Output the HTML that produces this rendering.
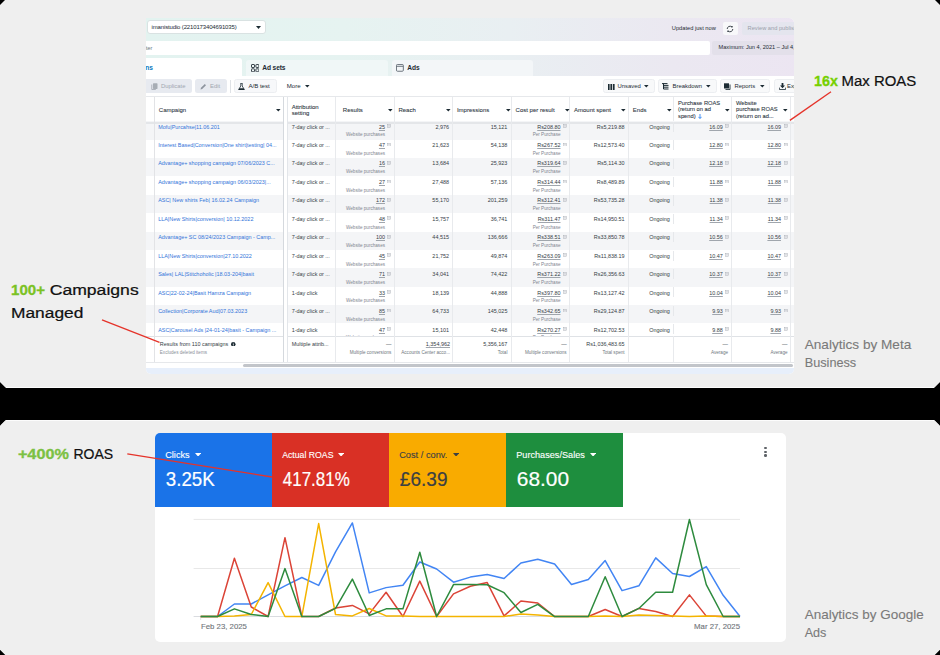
<!DOCTYPE html><html><head><meta charset="utf-8"><style>
*{box-sizing:border-box;margin:0;padding:0}
html,body{width:940px;height:655px;overflow:hidden;background:#000;font-family:"Liberation Sans",sans-serif}
.a{position:absolute}
.card{position:absolute;left:0;width:940px;background:#efefef;border-radius:7px}
.t{position:absolute;white-space:nowrap;line-height:1}
</style></head><body>

<div class="card" style="top:0;height:388px;border-radius:0;background:#fcfcfc;clip-path:polygon(6px 0,934px 0,940px 6px,940px 382px,934px 388px,6px 388px,0 382px,0 6px)"></div>
<div class="card" style="top:0;height:387px;border-radius:0;clip-path:polygon(5px 0,935px 0,940px 5px,940px 381.6px,934.6px 387px,5.4px 387px,0 381.6px,0 5px)"></div>
<div class="card" style="top:419.7px;height:235.3px;border-radius:0;background:#fcfcfc;clip-path:polygon(6px 0,934px 0,940px 6px,940px 229.3px,934px 235.3px,6px 235.3px,0 229.3px,0 6px)"></div>
<div class="card" style="top:420.8px;height:234.2px;border-radius:0;clip-path:polygon(5.4px 0,934.6px 0,940px 5.4px,940px 229px,934px 235px,6px 235px,0 229px,0 5.4px)"></div>
<div class="a" style="left:146px;top:17.5px;width:648px;height:356.0px;overflow:hidden;border-radius:0 5px 5px 5px;background:#fff">
<div class="a" style="left:0;top:0;width:660px;height:58.0px;background:linear-gradient(90deg,#e3f3f0 0%,#e6f3f1 30%,#e9eff2 55%,#ebe8f1 80%,#ece5f2 100%)"></div>
<div class="a" style="left:0.8px;top:2.3px;width:119.59999999999997px;height:13.900000000000002px;background:#fff;border:0.5px solid #d9e2e2;border-radius:3px"></div>
<div class="t" style="left:5.6px;top:6.4px;font-size:6px;color:#1c2b33;letter-spacing:-0.15px">imanistudio (2210173404691035)</div>
<svg class="a" style="left:109.5px;top:8.3px" width="5" height="3" viewBox="0 0 5 3"><path d="M0 0H5L2.5 3Z" fill="#1c2b33"/></svg>
<div class="t" style="left:525.8px;top:8.27px;font-size:5.7px;color:#1c2b33">Updated just now</div>
<div class="a" style="left:576.7px;top:4.3px;width:15.1px;height:12.8px;background:#f8f8fa;border-radius:2px"></div>
<svg class="a" style="left:580.3px;top:7.1px" width="8" height="8" viewBox="0 0 8 8"><g fill="none" stroke="#2a333b" stroke-width="0.9"><path d="M6.8 4A2.8 2.8 0 0 1 2.2 6.1"/><path d="M1.2 4A2.8 2.8 0 0 1 5.8 1.9"/></g><path d="M5 0.9L7 1.3 6 3Z M3 7.1L1 6.7 2 5Z" fill="#2a333b"/></svg>
<div class="a" style="left:596px;top:4.4px;width:60px;height:13.3px;background:#e4e5ee;border-radius:2px"></div>
<div class="t" style="left:601.6px;top:8.27px;font-size:5.7px;color:#9aa0ab">Review and publish</div>
<div class="a" style="left:0;top:23.1px;width:564px;height:14.5px;background:#fff;border-radius:0 2px 2px 0"></div>
<div class="t" style="left:-3.8px;top:28.5px;font-size:5.4px;color:#6b7680">filter</div>
<div class="a" style="left:566.3px;top:23.1px;width:90px;height:14.5px;background:#e3e0ea;border-radius:2px"></div>
<div class="t" style="left:572.6px;top:27.8px;font-size:5.6px;color:#1c2b33">Maximum: Jun 4, 2021 – Jul 4, 2024</div>
<div class="a" style="left:0;top:40.5px;width:96.3px;height:17.5px;background:#fff;border-radius:0 3px 0 0"></div>
<div class="t" style="left:-28.5px;top:47.01px;font-size:6.6px;color:#0a78be;font-weight:bold">Campaigns</div>
<div class="a" style="left:100px;top:42.5px;width:141.7px;height:15.5px;background:#f0f7f7;border-radius:3px 3px 0 0"></div>
<div class="t" style="left:116.3px;top:47.01px;font-size:6.6px;color:#1c2b33;font-weight:bold;letter-spacing:-0.1px">Ad sets</div>
<svg class="a" style="left:104.8px;top:46.2px" width="8.4" height="8.3" viewBox="0 0 8.4 8.3"><g fill="none" stroke="#3a444c" stroke-width="1"><rect x="0.5" y="0.5" width="3" height="3" rx="0.5"/><rect x="4.9" y="0.5" width="3" height="3" rx="0.5"/><rect x="0.5" y="4.8" width="3" height="3" rx="0.5"/><rect x="4.9" y="4.8" width="3" height="3" rx="0.5"/></g></svg>
<div class="a" style="left:246px;top:42.5px;width:141.29999999999995px;height:15.5px;background:#f3f6f8;border-radius:3px 3px 0 0"></div>
<div class="t" style="left:261.3px;top:47.01px;font-size:6.6px;color:#1c2b33;font-weight:bold">Ads</div>
<svg class="a" style="left:250.2px;top:46.6px" width="7.8" height="7.7" viewBox="0 0 7.8 7.7"><g fill="none" stroke="#5d6670" stroke-width="0.9"><rect x="0.45" y="0.45" width="6.9" height="6.8" rx="1"/><path d="M0.6 2.3H7.2"/></g></svg>
<div class="a" style="left:0;top:58.0px;width:660px;height:21.0px;background:#fff"></div>
<div class="a" style="left:-6px;top:61.7px;width:51.9px;height:14.3px;background:#e7eaf0;border-radius:2.5px"></div>
<svg class="a" style="left:4.7px;top:65.5px" width="7" height="7" viewBox="0 0 7 7"><rect x="2" y="0.3" width="4.5" height="5.6" rx="0.6" fill="#a7adb5"/><path d="M0.8 1.5V6.5H4.8" fill="none" stroke="#a7adb5" stroke-width="0.9"/></svg>
<div class="t" style="left:14.9px;top:66.11px;font-size:5.9px;color:#a1a7b0;">Duplicate</div>
<div class="a" style="left:49.3px;top:61.7px;width:31.7px;height:14.3px;background:#e7eaf0;border-radius:2.5px"></div>
<svg class="a" style="left:54.3px;top:65.5px" width="7" height="7" viewBox="0 0 7 7"><path d="M0.5 6.5L1 4.8 4.8 1 6 2.2 2.2 6Z" fill="#8d949e"/></svg>
<div class="t" style="left:64px;top:66.11px;font-size:5.9px;color:#a1a7b0;">Edit</div>
<div class="a" style="left:84.3px;top:62.5px;width:0.6px;height:13px;background:#dfe2e6"></div>
<div class="a" style="left:88px;top:61.7px;width:43.1px;height:14.3px;background:#f7f8fa;border:0.6px solid #eceef1;border-radius:2.5px"></div>
<svg class="a" style="left:92.4px;top:65.2px" width="7" height="7.5" viewBox="0 0 7 7.5"><path d="M2.4 0.4H4.6M2.8 0.5V3L0.6 6.6H6.4L4.2 3V0.5" fill="none" stroke="#1c2b33" stroke-width="0.8"/><path d="M1.4 5.2H5.6L6.4 6.9H0.6Z" fill="#1c2b33"/></svg>
<div class="t" style="left:102.4px;top:65.94px;font-size:6.1px;color:#1c2b33;">A/B test</div>
<div class="t" style="left:140.7px;top:65.94px;font-size:6.1px;color:#1c2b33;">More</div>
<svg class="a" style="left:158.7px;top:67.53px;overflow:visible" width="4.6" height="2.53" viewBox="0 0 4.6 2.53"><path d="M0 0H4.6L2.3 2.53Z" fill="#1c2b33"/></svg>
<div class="a" style="left:457.4px;top:61.9px;width:51.4px;height:14.1px;background:#f8f9fa;border:0.6px solid #eceef1;border-radius:2.5px"></div>
<div class="t" style="left:471.5px;top:66.11px;font-size:5.9px;color:#1c2b33;">Unsaved</div>
<svg class="a" style="left:498.3px;top:67.53px;overflow:visible" width="4.6" height="2.53" viewBox="0 0 4.6 2.53"><path d="M0 0H4.6L2.3 2.53Z" fill="#1c2b33"/></svg>
<svg class="a" style="left:461.7px;top:66.1px" width="7" height="6" viewBox="0 0 7 6"><rect x="0" y="0" width="1.6" height="6" fill="#1c2b33"/><rect x="2.4" y="0" width="1.6" height="6" fill="#1c2b33"/><rect x="4.8" y="0" width="1.8" height="6" fill="#1c2b33"/></svg>
<div class="a" style="left:512px;top:61.9px;width:58.7px;height:14.1px;background:#f8f9fa;border:0.6px solid #eceef1;border-radius:2.5px"></div>
<div class="t" style="left:526.5px;top:66.11px;font-size:5.9px;color:#1c2b33;">Breakdown</div>
<svg class="a" style="left:560.2px;top:67.53px;overflow:visible" width="4.6" height="2.53" viewBox="0 0 4.6 2.53"><path d="M0 0H4.6L2.3 2.53Z" fill="#1c2b33"/></svg>
<svg class="a" style="left:516.3px;top:65.8px" width="7" height="6.5" viewBox="0 0 7 6.5"><path d="M0 0.6H5.5M1.5 2.4H6.5M1.5 4.2H6.5M1.5 6H6.5M1.5 0.6V6" fill="none" stroke="#1c2b33" stroke-width="1"/></svg>
<div class="a" style="left:574px;top:61.9px;width:50px;height:14.1px;background:#f8f9fa;border:0.6px solid #eceef1;border-radius:2.5px"></div>
<div class="t" style="left:588.5px;top:66.11px;font-size:5.9px;color:#1c2b33;">Reports</div>
<svg class="a" style="left:613.5px;top:67.53px;overflow:visible" width="4.6" height="2.53" viewBox="0 0 4.6 2.53"><path d="M0 0H4.6L2.3 2.53Z" fill="#1c2b33"/></svg>
<svg class="a" style="left:578.3px;top:65.7px" width="7" height="7" viewBox="0 0 7 7"><rect x="0" y="0.3" width="5" height="5.2" fill="#1c2b33"/><path d="M6 1.5V6.6H1.5" fill="none" stroke="#1c2b33" stroke-width="0.9"/></svg>
<div class="a" style="left:628.3px;top:61.9px;width:55.7px;height:14.1px;background:#f8f9fa;border:0.6px solid #eceef1;border-radius:2.5px"></div>
<div class="t" style="left:641px;top:66.11px;font-size:5.9px;color:#1c2b33;">Export</div>
<svg class="a" style="left:632.6px;top:65.3px" width="7" height="7" viewBox="0 0 7 7"><path d="M2.6 0H4.4V2.6H6L3.5 5.2 1 2.6H2.6Z" fill="#1c2b33"/><path d="M0.4 4.6V6.5H6.6V4.6" fill="none" stroke="#1c2b33" stroke-width="0.8"/></svg>
<div class="a" style="left:-6px;top:79.0px;width:654px;height:25.8px;background:#fff"></div>
<div class="a" style="left:-6px;top:103.7px;width:654px;height:18.39px;background:#f4f5f7"></div>
<div class="a" style="left:-6px;top:122.09px;width:654px;height:18.39px;background:#fff"></div>
<div class="a" style="left:-6px;top:140.48px;width:654px;height:18.39px;background:#f4f5f7"></div>
<div class="a" style="left:-6px;top:158.87px;width:654px;height:18.39px;background:#fff"></div>
<div class="a" style="left:-6px;top:177.26px;width:654px;height:18.39px;background:#f4f5f7"></div>
<div class="a" style="left:-6px;top:195.65px;width:654px;height:18.39px;background:#fff"></div>
<div class="a" style="left:-6px;top:214.04px;width:654px;height:18.39px;background:#f4f5f7"></div>
<div class="a" style="left:-6px;top:232.43px;width:654px;height:18.39px;background:#fff"></div>
<div class="a" style="left:-6px;top:250.82px;width:654px;height:18.39px;background:#f4f5f7"></div>
<div class="a" style="left:-6px;top:269.21px;width:654px;height:18.39px;background:#fff"></div>
<div class="a" style="left:-6px;top:287.6px;width:654px;height:18.39px;background:#f4f5f7"></div>
<div class="a" style="left:-6px;top:305.99px;width:654px;height:12.71px;background:#fff"></div>
<div class="a" style="left:-6px;top:318.7px;width:654px;height:26.1px;background:#fff"></div>
<div class="a" style="left:-6px;top:78.7px;width:654px;height:0.7px;background:#e6e8eb"></div>
<div class="a" style="left:-6px;top:104.6px;width:654px;height:1.7px;background:#e4e6e9"></div>
<div class="a" style="left:-6px;top:318.3px;width:654px;height:0.9px;background:#dfe2e6"></div>
<div class="a" style="left:-6px;top:344.4px;width:654px;height:0.8px;background:#e6e8eb"></div>
<div class="a" style="left:8.15px;top:79.0px;width:0.7px;height:265.8px;background:#e8eaed"></div>
<div class="a" style="left:137.05px;top:79.0px;width:0.7px;height:265.8px;background:#e8eaed"></div>
<div class="a" style="left:141.15px;top:79.0px;width:0.7px;height:265.8px;background:#e8eaed"></div>
<div class="a" style="left:189.15px;top:79.0px;width:0.7px;height:265.8px;background:#e8eaed"></div>
<div class="a" style="left:247.95px;top:79.0px;width:0.7px;height:265.8px;background:#e8eaed"></div>
<div class="a" style="left:306.15px;top:79.0px;width:0.7px;height:265.8px;background:#e8eaed"></div>
<div class="a" style="left:365.45px;top:79.0px;width:0.7px;height:265.8px;background:#e8eaed"></div>
<div class="a" style="left:423.35px;top:79.0px;width:0.7px;height:265.8px;background:#e8eaed"></div>
<div class="a" style="left:482.05px;top:79.0px;width:0.7px;height:265.8px;background:#e8eaed"></div>
<div class="a" style="left:527.25px;top:79.0px;width:0.7px;height:24.7px;background:#e8eaed"></div>
<div class="a" style="left:527.25px;top:318.7px;width:0.7px;height:26.1px;background:#e8eaed"></div>
<div class="a" style="left:585.25px;top:79.0px;width:0.7px;height:265.8px;background:#e8eaed"></div>
<div class="a" style="left:644.05px;top:79.0px;width:0.7px;height:265.8px;background:#e8eaed"></div>
<div class="a" style="left:8.2px;top:79.0px;width:0.7px;height:265.8px;background:#e2e3e6"></div>
<div class="a" style="left:137.4px;top:79.0px;width:4.1px;height:265.8px;background:#fff"></div>
<div class="a" style="left:137.1px;top:79.0px;width:0.7px;height:265.8px;background:#d5d9de"></div>
<div class="a" style="left:141.2px;top:79.0px;width:0.6px;height:265.8px;background:#e3e6ea"></div>
<div class="t" style="left:12.8px;top:89.12px;font-size:6.0px;color:#2b353e;-webkit-text-stroke:0.08px #2b353e">Campaign</div>
<svg class="a" style="left:129.5px;top:91.23px;overflow:visible" width="4.6" height="2.53" viewBox="0 0 4.6 2.53"><path d="M0 0H4.6L2.3 2.53Z" fill="#1c2b33"/></svg>
<div class="t" style="left:145.7px;top:86.02px;font-size:6.0px;color:#2b353e;-webkit-text-stroke:0.08px #2b353e">Attribution</div>
<div class="t" style="left:145.7px;top:92.32px;font-size:6.0px;color:#2b353e;-webkit-text-stroke:0.08px #2b353e">setting</div>
<div class="t" style="left:196.8px;top:89.12px;font-size:6.0px;color:#2b353e;-webkit-text-stroke:0.08px #2b353e">Results</div>
<svg class="a" style="left:241.8px;top:91.23px;overflow:visible" width="4.6" height="2.53" viewBox="0 0 4.6 2.53"><path d="M0 0H4.6L2.3 2.53Z" fill="#1c2b33"/></svg>
<div class="t" style="left:252.4px;top:89.12px;font-size:6.0px;color:#2b353e;-webkit-text-stroke:0.08px #2b353e">Reach</div>
<svg class="a" style="left:300.3px;top:91.23px;overflow:visible" width="4.6" height="2.53" viewBox="0 0 4.6 2.53"><path d="M0 0H4.6L2.3 2.53Z" fill="#1c2b33"/></svg>
<div class="t" style="left:310.9px;top:89.12px;font-size:6.0px;color:#2b353e;-webkit-text-stroke:0.08px #2b353e">Impressions</div>
<svg class="a" style="left:359.5px;top:91.23px;overflow:visible" width="4.6" height="2.53" viewBox="0 0 4.6 2.53"><path d="M0 0H4.6L2.3 2.53Z" fill="#1c2b33"/></svg>
<div class="t" style="left:369.6px;top:89.12px;font-size:6.0px;color:#2b353e;-webkit-text-stroke:0.08px #2b353e">Cost per result</div>
<svg class="a" style="left:418.5px;top:91.23px;overflow:visible" width="4.6" height="2.53" viewBox="0 0 4.6 2.53"><path d="M0 0H4.6L2.3 2.53Z" fill="#1c2b33"/></svg>
<div class="t" style="left:428px;top:89.12px;font-size:6.0px;color:#2b353e;-webkit-text-stroke:0.08px #2b353e">Amount spent</div>
<svg class="a" style="left:475.2px;top:91.23px;overflow:visible" width="4.6" height="2.53" viewBox="0 0 4.6 2.53"><path d="M0 0H4.6L2.3 2.53Z" fill="#1c2b33"/></svg>
<div class="t" style="left:486.8px;top:89.12px;font-size:6.0px;color:#2b353e;-webkit-text-stroke:0.08px #2b353e">Ends</div>
<svg class="a" style="left:521.0px;top:91.23px;overflow:visible" width="4.6" height="2.53" viewBox="0 0 4.6 2.53"><path d="M0 0H4.6L2.3 2.53Z" fill="#1c2b33"/></svg>
<div class="t" style="left:532px;top:83.43px;font-size:5.75px;color:#2b353e;-webkit-text-stroke:0.08px #2b353e">Purchase ROAS</div>
<div class="t" style="left:532px;top:89.83px;font-size:5.75px;color:#2b353e;-webkit-text-stroke:0.08px #2b353e">(return on ad</div>
<div class="t" style="left:532px;top:96.13px;font-size:5.75px;color:#2b353e;-webkit-text-stroke:0.08px #2b353e">spend)</div>
<svg class="a" style="left:551.5px;top:96.3px" width="4" height="5" viewBox="0 0 4 5"><path d="M2 0V4.3M0.4 2.8L2 4.5 3.6 2.8" fill="none" stroke="#1877f2" stroke-width="0.8"/></svg>
<svg class="a" style="left:578.7px;top:91.44px;overflow:visible" width="4.6" height="2.53" viewBox="0 0 4.6 2.53"><path d="M0 0H4.6L2.3 2.53Z" fill="#1c2b33"/></svg>
<div class="t" style="left:590px;top:83.43px;font-size:5.75px;color:#2b353e;-webkit-text-stroke:0.08px #2b353e">Website</div>
<div class="t" style="left:590px;top:89.83px;font-size:5.75px;color:#2b353e;-webkit-text-stroke:0.08px #2b353e">purchase ROAS</div>
<div class="t" style="left:590px;top:96.13px;font-size:5.75px;color:#2b353e;-webkit-text-stroke:0.08px #2b353e">(return on ad...</div>
<svg class="a" style="left:637.2px;top:91.44px;overflow:visible" width="4.6" height="2.53" viewBox="0 0 4.6 2.53"><path d="M0 0H4.6L2.3 2.53Z" fill="#1c2b33"/></svg>
<div class="a" style="left:0;top:103.7px;width:648px;height:215.0px;overflow:hidden">
<div class="t" style="left:12.2px;top:3.39px;font-size:5.45px;color:#3274d9;">Mofu|Purcahse|11.06.201</div>
<div class="t" style="left:145.7px;top:3.39px;font-size:5.45px;color:#343d45;">7-day click or ...</div>
<div class="t" style="right:409px;top:3.39px;font-size:5.45px;color:#343d45;text-decoration:underline;text-decoration-color:#a0a6ad;text-underline-offset:0.8px;text-decoration-thickness:0.35px">25</div>
<svg class="a" style="left:241.4px;top:3.0px" width="4" height="3.8" viewBox="0 0 4 3.8"><rect x="0.3" y="0.3" width="3.4" height="3.2" fill="none" stroke="#a9aeb5" stroke-width="0.5"/><rect x="1.5" y="1.1" width="1" height="1.6" fill="#b9bdc3"/></svg>
<div class="t" style="right:409px;top:12.21px;font-size:4.6px;color:#7f868f;">Website purchases</div>
<div class="t" style="right:345px;top:3.39px;font-size:5.45px;color:#343d45;">2,976</div>
<div class="t" style="right:286.6px;top:3.39px;font-size:5.45px;color:#343d45;">15,121</div>
<div class="t" style="right:233.5px;top:3.39px;font-size:5.45px;color:#343d45;text-decoration:underline;text-decoration-color:#a0a6ad;text-underline-offset:0.8px;text-decoration-thickness:0.35px">Rs208.80</div>
<svg class="a" style="left:417.0px;top:3.0px" width="4" height="3.8" viewBox="0 0 4 3.8"><rect x="0.3" y="0.3" width="3.4" height="3.2" fill="none" stroke="#a9aeb5" stroke-width="0.5"/><rect x="1.5" y="1.1" width="1" height="1.6" fill="#b9bdc3"/></svg>
<div class="t" style="right:233.5px;top:12.21px;font-size:4.6px;color:#7f868f;">Per Purchase</div>
<div class="t" style="right:169.4px;top:3.39px;font-size:5.45px;color:#343d45;">Rs5,219.88</div>
<div class="t" style="right:124.2px;top:3.39px;font-size:5.45px;color:#343d45;">Ongoing</div>
<div class="a" style="left:527.3px;top:0.6px;width:0.6px;height:10.2px;background:#e6e8eb"></div>
<div class="t" style="right:71.2px;top:3.39px;font-size:5.45px;color:#343d45;text-decoration:underline;text-decoration-color:#a0a6ad;text-underline-offset:0.8px;text-decoration-thickness:0.35px">16.09</div>
<svg class="a" style="left:579.3px;top:3.0px" width="4" height="3.8" viewBox="0 0 4 3.8"><rect x="0.3" y="0.3" width="3.4" height="3.2" fill="none" stroke="#a9aeb5" stroke-width="0.5"/><rect x="1.5" y="1.1" width="1" height="1.6" fill="#b9bdc3"/></svg>
<div class="t" style="right:13px;top:3.39px;font-size:5.45px;color:#343d45;text-decoration:underline;text-decoration-color:#a0a6ad;text-underline-offset:0.8px;text-decoration-thickness:0.35px">16.09</div>
<svg class="a" style="left:637.5px;top:3.0px" width="4" height="3.8" viewBox="0 0 4 3.8"><rect x="0.3" y="0.3" width="3.4" height="3.2" fill="none" stroke="#a9aeb5" stroke-width="0.5"/><rect x="1.5" y="1.1" width="1" height="1.6" fill="#b9bdc3"/></svg>
<div class="t" style="left:12.2px;top:21.84px;font-size:5.45px;color:#3274d9;">Interest Based|Conversion|One shirt|testing| 04...</div>
<div class="t" style="left:145.7px;top:21.84px;font-size:5.45px;color:#343d45;">7-day click or ...</div>
<div class="t" style="right:409px;top:21.84px;font-size:5.45px;color:#343d45;text-decoration:underline;text-decoration-color:#a0a6ad;text-underline-offset:0.8px;text-decoration-thickness:0.35px">47</div>
<svg class="a" style="left:241.4px;top:21.45px" width="4" height="3.8" viewBox="0 0 4 3.8"><rect x="0.3" y="0.3" width="3.4" height="3.2" fill="none" stroke="#a9aeb5" stroke-width="0.5"/><rect x="1.5" y="1.1" width="1" height="1.6" fill="#b9bdc3"/></svg>
<div class="t" style="right:409px;top:30.66px;font-size:4.6px;color:#7f868f;">Website purchases</div>
<div class="t" style="right:345px;top:21.84px;font-size:5.45px;color:#343d45;">21,623</div>
<div class="t" style="right:286.6px;top:21.84px;font-size:5.45px;color:#343d45;">54,138</div>
<div class="t" style="right:233.5px;top:21.84px;font-size:5.45px;color:#343d45;text-decoration:underline;text-decoration-color:#a0a6ad;text-underline-offset:0.8px;text-decoration-thickness:0.35px">Rs267.52</div>
<svg class="a" style="left:417.0px;top:21.45px" width="4" height="3.8" viewBox="0 0 4 3.8"><rect x="0.3" y="0.3" width="3.4" height="3.2" fill="none" stroke="#a9aeb5" stroke-width="0.5"/><rect x="1.5" y="1.1" width="1" height="1.6" fill="#b9bdc3"/></svg>
<div class="t" style="right:233.5px;top:30.66px;font-size:4.6px;color:#7f868f;">Per Purchase</div>
<div class="t" style="right:169.4px;top:21.84px;font-size:5.45px;color:#343d45;">Rs12,573.40</div>
<div class="t" style="right:124.2px;top:21.84px;font-size:5.45px;color:#343d45;">Ongoing</div>
<div class="a" style="left:527.3px;top:18.99px;width:0.6px;height:10.2px;background:#e6e8eb"></div>
<div class="t" style="right:71.2px;top:21.84px;font-size:5.45px;color:#343d45;text-decoration:underline;text-decoration-color:#a0a6ad;text-underline-offset:0.8px;text-decoration-thickness:0.35px">12.80</div>
<svg class="a" style="left:579.3px;top:21.45px" width="4" height="3.8" viewBox="0 0 4 3.8"><rect x="0.3" y="0.3" width="3.4" height="3.2" fill="none" stroke="#a9aeb5" stroke-width="0.5"/><rect x="1.5" y="1.1" width="1" height="1.6" fill="#b9bdc3"/></svg>
<div class="t" style="right:13px;top:21.84px;font-size:5.45px;color:#343d45;text-decoration:underline;text-decoration-color:#a0a6ad;text-underline-offset:0.8px;text-decoration-thickness:0.35px">12.80</div>
<svg class="a" style="left:637.5px;top:21.45px" width="4" height="3.8" viewBox="0 0 4 3.8"><rect x="0.3" y="0.3" width="3.4" height="3.2" fill="none" stroke="#a9aeb5" stroke-width="0.5"/><rect x="1.5" y="1.1" width="1" height="1.6" fill="#b9bdc3"/></svg>
<div class="t" style="left:12.2px;top:40.29px;font-size:5.45px;color:#3274d9;">Advantage+ shopping campaign 07/06/2023 C...</div>
<div class="t" style="left:145.7px;top:40.29px;font-size:5.45px;color:#343d45;">7-day click or ...</div>
<div class="t" style="right:409px;top:40.29px;font-size:5.45px;color:#343d45;text-decoration:underline;text-decoration-color:#a0a6ad;text-underline-offset:0.8px;text-decoration-thickness:0.35px">16</div>
<svg class="a" style="left:241.4px;top:39.9px" width="4" height="3.8" viewBox="0 0 4 3.8"><rect x="0.3" y="0.3" width="3.4" height="3.2" fill="none" stroke="#a9aeb5" stroke-width="0.5"/><rect x="1.5" y="1.1" width="1" height="1.6" fill="#b9bdc3"/></svg>
<div class="t" style="right:409px;top:49.11px;font-size:4.6px;color:#7f868f;">Website purchases</div>
<div class="t" style="right:345px;top:40.29px;font-size:5.45px;color:#343d45;">13,684</div>
<div class="t" style="right:286.6px;top:40.29px;font-size:5.45px;color:#343d45;">25,923</div>
<div class="t" style="right:233.5px;top:40.29px;font-size:5.45px;color:#343d45;text-decoration:underline;text-decoration-color:#a0a6ad;text-underline-offset:0.8px;text-decoration-thickness:0.35px">Rs319.64</div>
<svg class="a" style="left:417.0px;top:39.9px" width="4" height="3.8" viewBox="0 0 4 3.8"><rect x="0.3" y="0.3" width="3.4" height="3.2" fill="none" stroke="#a9aeb5" stroke-width="0.5"/><rect x="1.5" y="1.1" width="1" height="1.6" fill="#b9bdc3"/></svg>
<div class="t" style="right:233.5px;top:49.11px;font-size:4.6px;color:#7f868f;">Per Purchase</div>
<div class="t" style="right:169.4px;top:40.29px;font-size:5.45px;color:#343d45;">Rs5,114.30</div>
<div class="t" style="right:124.2px;top:40.29px;font-size:5.45px;color:#343d45;">Ongoing</div>
<div class="a" style="left:527.3px;top:37.38px;width:0.6px;height:10.2px;background:#e6e8eb"></div>
<div class="t" style="right:71.2px;top:40.29px;font-size:5.45px;color:#343d45;text-decoration:underline;text-decoration-color:#a0a6ad;text-underline-offset:0.8px;text-decoration-thickness:0.35px">12.18</div>
<svg class="a" style="left:579.3px;top:39.9px" width="4" height="3.8" viewBox="0 0 4 3.8"><rect x="0.3" y="0.3" width="3.4" height="3.2" fill="none" stroke="#a9aeb5" stroke-width="0.5"/><rect x="1.5" y="1.1" width="1" height="1.6" fill="#b9bdc3"/></svg>
<div class="t" style="right:13px;top:40.29px;font-size:5.45px;color:#343d45;text-decoration:underline;text-decoration-color:#a0a6ad;text-underline-offset:0.8px;text-decoration-thickness:0.35px">12.18</div>
<svg class="a" style="left:637.5px;top:39.9px" width="4" height="3.8" viewBox="0 0 4 3.8"><rect x="0.3" y="0.3" width="3.4" height="3.2" fill="none" stroke="#a9aeb5" stroke-width="0.5"/><rect x="1.5" y="1.1" width="1" height="1.6" fill="#b9bdc3"/></svg>
<div class="t" style="left:12.2px;top:58.74px;font-size:5.45px;color:#3274d9;">Advantage+ shopping campaign 06/03/2023|...</div>
<div class="t" style="left:145.7px;top:58.74px;font-size:5.45px;color:#343d45;">7-day click or ...</div>
<div class="t" style="right:409px;top:58.74px;font-size:5.45px;color:#343d45;text-decoration:underline;text-decoration-color:#a0a6ad;text-underline-offset:0.8px;text-decoration-thickness:0.35px">27</div>
<svg class="a" style="left:241.4px;top:58.35px" width="4" height="3.8" viewBox="0 0 4 3.8"><rect x="0.3" y="0.3" width="3.4" height="3.2" fill="none" stroke="#a9aeb5" stroke-width="0.5"/><rect x="1.5" y="1.1" width="1" height="1.6" fill="#b9bdc3"/></svg>
<div class="t" style="right:409px;top:67.56px;font-size:4.6px;color:#7f868f;">Website purchases</div>
<div class="t" style="right:345px;top:58.74px;font-size:5.45px;color:#343d45;">27,488</div>
<div class="t" style="right:286.6px;top:58.74px;font-size:5.45px;color:#343d45;">57,136</div>
<div class="t" style="right:233.5px;top:58.74px;font-size:5.45px;color:#343d45;text-decoration:underline;text-decoration-color:#a0a6ad;text-underline-offset:0.8px;text-decoration-thickness:0.35px">Rs314.44</div>
<svg class="a" style="left:417.0px;top:58.35px" width="4" height="3.8" viewBox="0 0 4 3.8"><rect x="0.3" y="0.3" width="3.4" height="3.2" fill="none" stroke="#a9aeb5" stroke-width="0.5"/><rect x="1.5" y="1.1" width="1" height="1.6" fill="#b9bdc3"/></svg>
<div class="t" style="right:233.5px;top:67.56px;font-size:4.6px;color:#7f868f;">Per Purchase</div>
<div class="t" style="right:169.4px;top:58.74px;font-size:5.45px;color:#343d45;">Rs8,489.89</div>
<div class="t" style="right:124.2px;top:58.74px;font-size:5.45px;color:#343d45;">Ongoing</div>
<div class="a" style="left:527.3px;top:55.77px;width:0.6px;height:10.2px;background:#e6e8eb"></div>
<div class="t" style="right:71.2px;top:58.74px;font-size:5.45px;color:#343d45;text-decoration:underline;text-decoration-color:#a0a6ad;text-underline-offset:0.8px;text-decoration-thickness:0.35px">11.88</div>
<svg class="a" style="left:579.3px;top:58.35px" width="4" height="3.8" viewBox="0 0 4 3.8"><rect x="0.3" y="0.3" width="3.4" height="3.2" fill="none" stroke="#a9aeb5" stroke-width="0.5"/><rect x="1.5" y="1.1" width="1" height="1.6" fill="#b9bdc3"/></svg>
<div class="t" style="right:13px;top:58.74px;font-size:5.45px;color:#343d45;text-decoration:underline;text-decoration-color:#a0a6ad;text-underline-offset:0.8px;text-decoration-thickness:0.35px">11.88</div>
<svg class="a" style="left:637.5px;top:58.35px" width="4" height="3.8" viewBox="0 0 4 3.8"><rect x="0.3" y="0.3" width="3.4" height="3.2" fill="none" stroke="#a9aeb5" stroke-width="0.5"/><rect x="1.5" y="1.1" width="1" height="1.6" fill="#b9bdc3"/></svg>
<div class="t" style="left:12.2px;top:77.19px;font-size:5.45px;color:#3274d9;">ASC| New shirts Feb| 16.02.24 Campaign</div>
<div class="t" style="left:145.7px;top:77.19px;font-size:5.45px;color:#343d45;">7-day click or ...</div>
<div class="t" style="right:409px;top:77.19px;font-size:5.45px;color:#343d45;text-decoration:underline;text-decoration-color:#a0a6ad;text-underline-offset:0.8px;text-decoration-thickness:0.35px">172</div>
<svg class="a" style="left:241.4px;top:76.8px" width="4" height="3.8" viewBox="0 0 4 3.8"><rect x="0.3" y="0.3" width="3.4" height="3.2" fill="none" stroke="#a9aeb5" stroke-width="0.5"/><rect x="1.5" y="1.1" width="1" height="1.6" fill="#b9bdc3"/></svg>
<div class="t" style="right:409px;top:86.01px;font-size:4.6px;color:#7f868f;">Website purchases</div>
<div class="t" style="right:345px;top:77.19px;font-size:5.45px;color:#343d45;">55,170</div>
<div class="t" style="right:286.6px;top:77.19px;font-size:5.45px;color:#343d45;">201,259</div>
<div class="t" style="right:233.5px;top:77.19px;font-size:5.45px;color:#343d45;text-decoration:underline;text-decoration-color:#a0a6ad;text-underline-offset:0.8px;text-decoration-thickness:0.35px">Rs312.41</div>
<svg class="a" style="left:417.0px;top:76.8px" width="4" height="3.8" viewBox="0 0 4 3.8"><rect x="0.3" y="0.3" width="3.4" height="3.2" fill="none" stroke="#a9aeb5" stroke-width="0.5"/><rect x="1.5" y="1.1" width="1" height="1.6" fill="#b9bdc3"/></svg>
<div class="t" style="right:233.5px;top:86.01px;font-size:4.6px;color:#7f868f;">Per Purchase</div>
<div class="t" style="right:169.4px;top:77.19px;font-size:5.45px;color:#343d45;">Rs53,735.28</div>
<div class="t" style="right:124.2px;top:77.19px;font-size:5.45px;color:#343d45;">Ongoing</div>
<div class="a" style="left:527.3px;top:74.16px;width:0.6px;height:10.2px;background:#e6e8eb"></div>
<div class="t" style="right:71.2px;top:77.19px;font-size:5.45px;color:#343d45;text-decoration:underline;text-decoration-color:#a0a6ad;text-underline-offset:0.8px;text-decoration-thickness:0.35px">11.38</div>
<svg class="a" style="left:579.3px;top:76.8px" width="4" height="3.8" viewBox="0 0 4 3.8"><rect x="0.3" y="0.3" width="3.4" height="3.2" fill="none" stroke="#a9aeb5" stroke-width="0.5"/><rect x="1.5" y="1.1" width="1" height="1.6" fill="#b9bdc3"/></svg>
<div class="t" style="right:13px;top:77.19px;font-size:5.45px;color:#343d45;text-decoration:underline;text-decoration-color:#a0a6ad;text-underline-offset:0.8px;text-decoration-thickness:0.35px">11.38</div>
<svg class="a" style="left:637.5px;top:76.8px" width="4" height="3.8" viewBox="0 0 4 3.8"><rect x="0.3" y="0.3" width="3.4" height="3.2" fill="none" stroke="#a9aeb5" stroke-width="0.5"/><rect x="1.5" y="1.1" width="1" height="1.6" fill="#b9bdc3"/></svg>
<div class="t" style="left:12.2px;top:95.64px;font-size:5.45px;color:#3274d9;">LLA|New Shirts|conversion| 10.12.2022</div>
<div class="t" style="left:145.7px;top:95.64px;font-size:5.45px;color:#343d45;">7-day click or ...</div>
<div class="t" style="right:409px;top:95.64px;font-size:5.45px;color:#343d45;text-decoration:underline;text-decoration-color:#a0a6ad;text-underline-offset:0.8px;text-decoration-thickness:0.35px">48</div>
<svg class="a" style="left:241.4px;top:95.25px" width="4" height="3.8" viewBox="0 0 4 3.8"><rect x="0.3" y="0.3" width="3.4" height="3.2" fill="none" stroke="#a9aeb5" stroke-width="0.5"/><rect x="1.5" y="1.1" width="1" height="1.6" fill="#b9bdc3"/></svg>
<div class="t" style="right:409px;top:104.46px;font-size:4.6px;color:#7f868f;">Website purchases</div>
<div class="t" style="right:345px;top:95.64px;font-size:5.45px;color:#343d45;">15,757</div>
<div class="t" style="right:286.6px;top:95.64px;font-size:5.45px;color:#343d45;">36,741</div>
<div class="t" style="right:233.5px;top:95.64px;font-size:5.45px;color:#343d45;text-decoration:underline;text-decoration-color:#a0a6ad;text-underline-offset:0.8px;text-decoration-thickness:0.35px">Rs311.47</div>
<svg class="a" style="left:417.0px;top:95.25px" width="4" height="3.8" viewBox="0 0 4 3.8"><rect x="0.3" y="0.3" width="3.4" height="3.2" fill="none" stroke="#a9aeb5" stroke-width="0.5"/><rect x="1.5" y="1.1" width="1" height="1.6" fill="#b9bdc3"/></svg>
<div class="t" style="right:233.5px;top:104.46px;font-size:4.6px;color:#7f868f;">Per Purchase</div>
<div class="t" style="right:169.4px;top:95.64px;font-size:5.45px;color:#343d45;">Rs14,950.51</div>
<div class="t" style="right:124.2px;top:95.64px;font-size:5.45px;color:#343d45;">Ongoing</div>
<div class="a" style="left:527.3px;top:92.55px;width:0.6px;height:10.2px;background:#e6e8eb"></div>
<div class="t" style="right:71.2px;top:95.64px;font-size:5.45px;color:#343d45;text-decoration:underline;text-decoration-color:#a0a6ad;text-underline-offset:0.8px;text-decoration-thickness:0.35px">11.34</div>
<svg class="a" style="left:579.3px;top:95.25px" width="4" height="3.8" viewBox="0 0 4 3.8"><rect x="0.3" y="0.3" width="3.4" height="3.2" fill="none" stroke="#a9aeb5" stroke-width="0.5"/><rect x="1.5" y="1.1" width="1" height="1.6" fill="#b9bdc3"/></svg>
<div class="t" style="right:13px;top:95.64px;font-size:5.45px;color:#343d45;text-decoration:underline;text-decoration-color:#a0a6ad;text-underline-offset:0.8px;text-decoration-thickness:0.35px">11.34</div>
<svg class="a" style="left:637.5px;top:95.25px" width="4" height="3.8" viewBox="0 0 4 3.8"><rect x="0.3" y="0.3" width="3.4" height="3.2" fill="none" stroke="#a9aeb5" stroke-width="0.5"/><rect x="1.5" y="1.1" width="1" height="1.6" fill="#b9bdc3"/></svg>
<div class="t" style="left:12.2px;top:114.09px;font-size:5.45px;color:#3274d9;">Advantage+ SC 08/24/2023 Campaign - Camp...</div>
<div class="t" style="left:145.7px;top:114.09px;font-size:5.45px;color:#343d45;">7-day click or ...</div>
<div class="t" style="right:409px;top:114.09px;font-size:5.45px;color:#343d45;text-decoration:underline;text-decoration-color:#a0a6ad;text-underline-offset:0.8px;text-decoration-thickness:0.35px">100</div>
<svg class="a" style="left:241.4px;top:113.7px" width="4" height="3.8" viewBox="0 0 4 3.8"><rect x="0.3" y="0.3" width="3.4" height="3.2" fill="none" stroke="#a9aeb5" stroke-width="0.5"/><rect x="1.5" y="1.1" width="1" height="1.6" fill="#b9bdc3"/></svg>
<div class="t" style="right:409px;top:122.91px;font-size:4.6px;color:#7f868f;">Website purchases</div>
<div class="t" style="right:345px;top:114.09px;font-size:5.45px;color:#343d45;">44,515</div>
<div class="t" style="right:286.6px;top:114.09px;font-size:5.45px;color:#343d45;">136,666</div>
<div class="t" style="right:233.5px;top:114.09px;font-size:5.45px;color:#343d45;text-decoration:underline;text-decoration-color:#a0a6ad;text-underline-offset:0.8px;text-decoration-thickness:0.35px">Rs338.51</div>
<svg class="a" style="left:417.0px;top:113.7px" width="4" height="3.8" viewBox="0 0 4 3.8"><rect x="0.3" y="0.3" width="3.4" height="3.2" fill="none" stroke="#a9aeb5" stroke-width="0.5"/><rect x="1.5" y="1.1" width="1" height="1.6" fill="#b9bdc3"/></svg>
<div class="t" style="right:233.5px;top:122.91px;font-size:4.6px;color:#7f868f;">Per Purchase</div>
<div class="t" style="right:169.4px;top:114.09px;font-size:5.45px;color:#343d45;">Rs33,850.78</div>
<div class="t" style="right:124.2px;top:114.09px;font-size:5.45px;color:#343d45;">Ongoing</div>
<div class="a" style="left:527.3px;top:110.94px;width:0.6px;height:10.2px;background:#e6e8eb"></div>
<div class="t" style="right:71.2px;top:114.09px;font-size:5.45px;color:#343d45;text-decoration:underline;text-decoration-color:#a0a6ad;text-underline-offset:0.8px;text-decoration-thickness:0.35px">10.56</div>
<svg class="a" style="left:579.3px;top:113.7px" width="4" height="3.8" viewBox="0 0 4 3.8"><rect x="0.3" y="0.3" width="3.4" height="3.2" fill="none" stroke="#a9aeb5" stroke-width="0.5"/><rect x="1.5" y="1.1" width="1" height="1.6" fill="#b9bdc3"/></svg>
<div class="t" style="right:13px;top:114.09px;font-size:5.45px;color:#343d45;text-decoration:underline;text-decoration-color:#a0a6ad;text-underline-offset:0.8px;text-decoration-thickness:0.35px">10.56</div>
<svg class="a" style="left:637.5px;top:113.7px" width="4" height="3.8" viewBox="0 0 4 3.8"><rect x="0.3" y="0.3" width="3.4" height="3.2" fill="none" stroke="#a9aeb5" stroke-width="0.5"/><rect x="1.5" y="1.1" width="1" height="1.6" fill="#b9bdc3"/></svg>
<div class="t" style="left:12.2px;top:132.54px;font-size:5.45px;color:#3274d9;">LLA|New Shirts|conversion|27.10.2022</div>
<div class="t" style="left:145.7px;top:132.54px;font-size:5.45px;color:#343d45;">7-day click or ...</div>
<div class="t" style="right:409px;top:132.54px;font-size:5.45px;color:#343d45;text-decoration:underline;text-decoration-color:#a0a6ad;text-underline-offset:0.8px;text-decoration-thickness:0.35px">45</div>
<svg class="a" style="left:241.4px;top:132.15px" width="4" height="3.8" viewBox="0 0 4 3.8"><rect x="0.3" y="0.3" width="3.4" height="3.2" fill="none" stroke="#a9aeb5" stroke-width="0.5"/><rect x="1.5" y="1.1" width="1" height="1.6" fill="#b9bdc3"/></svg>
<div class="t" style="right:409px;top:141.36px;font-size:4.6px;color:#7f868f;">Website purchases</div>
<div class="t" style="right:345px;top:132.54px;font-size:5.45px;color:#343d45;">21,752</div>
<div class="t" style="right:286.6px;top:132.54px;font-size:5.45px;color:#343d45;">49,874</div>
<div class="t" style="right:233.5px;top:132.54px;font-size:5.45px;color:#343d45;text-decoration:underline;text-decoration-color:#a0a6ad;text-underline-offset:0.8px;text-decoration-thickness:0.35px">Rs263.09</div>
<svg class="a" style="left:417.0px;top:132.15px" width="4" height="3.8" viewBox="0 0 4 3.8"><rect x="0.3" y="0.3" width="3.4" height="3.2" fill="none" stroke="#a9aeb5" stroke-width="0.5"/><rect x="1.5" y="1.1" width="1" height="1.6" fill="#b9bdc3"/></svg>
<div class="t" style="right:233.5px;top:141.36px;font-size:4.6px;color:#7f868f;">Per Purchase</div>
<div class="t" style="right:169.4px;top:132.54px;font-size:5.45px;color:#343d45;">Rs11,838.19</div>
<div class="t" style="right:124.2px;top:132.54px;font-size:5.45px;color:#343d45;">Ongoing</div>
<div class="a" style="left:527.3px;top:129.33px;width:0.6px;height:10.2px;background:#e6e8eb"></div>
<div class="t" style="right:71.2px;top:132.54px;font-size:5.45px;color:#343d45;text-decoration:underline;text-decoration-color:#a0a6ad;text-underline-offset:0.8px;text-decoration-thickness:0.35px">10.47</div>
<svg class="a" style="left:579.3px;top:132.15px" width="4" height="3.8" viewBox="0 0 4 3.8"><rect x="0.3" y="0.3" width="3.4" height="3.2" fill="none" stroke="#a9aeb5" stroke-width="0.5"/><rect x="1.5" y="1.1" width="1" height="1.6" fill="#b9bdc3"/></svg>
<div class="t" style="right:13px;top:132.54px;font-size:5.45px;color:#343d45;text-decoration:underline;text-decoration-color:#a0a6ad;text-underline-offset:0.8px;text-decoration-thickness:0.35px">10.47</div>
<svg class="a" style="left:637.5px;top:132.15px" width="4" height="3.8" viewBox="0 0 4 3.8"><rect x="0.3" y="0.3" width="3.4" height="3.2" fill="none" stroke="#a9aeb5" stroke-width="0.5"/><rect x="1.5" y="1.1" width="1" height="1.6" fill="#b9bdc3"/></svg>
<div class="t" style="left:12.2px;top:150.99px;font-size:5.45px;color:#3274d9;">Sales| LAL|Stitchoholic |18.03-204|basit</div>
<div class="t" style="left:145.7px;top:150.99px;font-size:5.45px;color:#343d45;">7-day click or ...</div>
<div class="t" style="right:409px;top:150.99px;font-size:5.45px;color:#343d45;text-decoration:underline;text-decoration-color:#a0a6ad;text-underline-offset:0.8px;text-decoration-thickness:0.35px">71</div>
<svg class="a" style="left:241.4px;top:150.6px" width="4" height="3.8" viewBox="0 0 4 3.8"><rect x="0.3" y="0.3" width="3.4" height="3.2" fill="none" stroke="#a9aeb5" stroke-width="0.5"/><rect x="1.5" y="1.1" width="1" height="1.6" fill="#b9bdc3"/></svg>
<div class="t" style="right:409px;top:159.81px;font-size:4.6px;color:#7f868f;">Website purchases</div>
<div class="t" style="right:345px;top:150.99px;font-size:5.45px;color:#343d45;">34,041</div>
<div class="t" style="right:286.6px;top:150.99px;font-size:5.45px;color:#343d45;">74,422</div>
<div class="t" style="right:233.5px;top:150.99px;font-size:5.45px;color:#343d45;text-decoration:underline;text-decoration-color:#a0a6ad;text-underline-offset:0.8px;text-decoration-thickness:0.35px">Rs371.22</div>
<svg class="a" style="left:417.0px;top:150.6px" width="4" height="3.8" viewBox="0 0 4 3.8"><rect x="0.3" y="0.3" width="3.4" height="3.2" fill="none" stroke="#a9aeb5" stroke-width="0.5"/><rect x="1.5" y="1.1" width="1" height="1.6" fill="#b9bdc3"/></svg>
<div class="t" style="right:233.5px;top:159.81px;font-size:4.6px;color:#7f868f;">Per Purchase</div>
<div class="t" style="right:169.4px;top:150.99px;font-size:5.45px;color:#343d45;">Rs26,356.63</div>
<div class="t" style="right:124.2px;top:150.99px;font-size:5.45px;color:#343d45;">Ongoing</div>
<div class="a" style="left:527.3px;top:147.72px;width:0.6px;height:10.2px;background:#e6e8eb"></div>
<div class="t" style="right:71.2px;top:150.99px;font-size:5.45px;color:#343d45;text-decoration:underline;text-decoration-color:#a0a6ad;text-underline-offset:0.8px;text-decoration-thickness:0.35px">10.37</div>
<svg class="a" style="left:579.3px;top:150.6px" width="4" height="3.8" viewBox="0 0 4 3.8"><rect x="0.3" y="0.3" width="3.4" height="3.2" fill="none" stroke="#a9aeb5" stroke-width="0.5"/><rect x="1.5" y="1.1" width="1" height="1.6" fill="#b9bdc3"/></svg>
<div class="t" style="right:13px;top:150.99px;font-size:5.45px;color:#343d45;text-decoration:underline;text-decoration-color:#a0a6ad;text-underline-offset:0.8px;text-decoration-thickness:0.35px">10.37</div>
<svg class="a" style="left:637.5px;top:150.6px" width="4" height="3.8" viewBox="0 0 4 3.8"><rect x="0.3" y="0.3" width="3.4" height="3.2" fill="none" stroke="#a9aeb5" stroke-width="0.5"/><rect x="1.5" y="1.1" width="1" height="1.6" fill="#b9bdc3"/></svg>
<div class="t" style="left:12.2px;top:169.44px;font-size:5.45px;color:#3274d9;">ASC|22-02-24|Basit Hamza Campaign</div>
<div class="t" style="left:145.7px;top:169.44px;font-size:5.45px;color:#343d45;">1-day click</div>
<div class="t" style="right:409px;top:169.44px;font-size:5.45px;color:#343d45;text-decoration:underline;text-decoration-color:#a0a6ad;text-underline-offset:0.8px;text-decoration-thickness:0.35px">33</div>
<svg class="a" style="left:241.4px;top:169.05px" width="4" height="3.8" viewBox="0 0 4 3.8"><rect x="0.3" y="0.3" width="3.4" height="3.2" fill="none" stroke="#a9aeb5" stroke-width="0.5"/><rect x="1.5" y="1.1" width="1" height="1.6" fill="#b9bdc3"/></svg>
<div class="t" style="right:409px;top:178.26px;font-size:4.6px;color:#7f868f;">Website purchases</div>
<div class="t" style="right:345px;top:169.44px;font-size:5.45px;color:#343d45;">18,139</div>
<div class="t" style="right:286.6px;top:169.44px;font-size:5.45px;color:#343d45;">44,888</div>
<div class="t" style="right:233.5px;top:169.44px;font-size:5.45px;color:#343d45;text-decoration:underline;text-decoration-color:#a0a6ad;text-underline-offset:0.8px;text-decoration-thickness:0.35px">Rs397.80</div>
<svg class="a" style="left:417.0px;top:169.05px" width="4" height="3.8" viewBox="0 0 4 3.8"><rect x="0.3" y="0.3" width="3.4" height="3.2" fill="none" stroke="#a9aeb5" stroke-width="0.5"/><rect x="1.5" y="1.1" width="1" height="1.6" fill="#b9bdc3"/></svg>
<div class="t" style="right:233.5px;top:178.26px;font-size:4.6px;color:#7f868f;">Per Purchase</div>
<div class="t" style="right:169.4px;top:169.44px;font-size:5.45px;color:#343d45;">Rs13,127.42</div>
<div class="t" style="right:124.2px;top:169.44px;font-size:5.45px;color:#343d45;">Ongoing</div>
<div class="a" style="left:527.3px;top:166.11px;width:0.6px;height:10.2px;background:#e6e8eb"></div>
<div class="t" style="right:71.2px;top:169.44px;font-size:5.45px;color:#343d45;text-decoration:underline;text-decoration-color:#a0a6ad;text-underline-offset:0.8px;text-decoration-thickness:0.35px">10.04</div>
<svg class="a" style="left:579.3px;top:169.05px" width="4" height="3.8" viewBox="0 0 4 3.8"><rect x="0.3" y="0.3" width="3.4" height="3.2" fill="none" stroke="#a9aeb5" stroke-width="0.5"/><rect x="1.5" y="1.1" width="1" height="1.6" fill="#b9bdc3"/></svg>
<div class="t" style="right:13px;top:169.44px;font-size:5.45px;color:#343d45;text-decoration:underline;text-decoration-color:#a0a6ad;text-underline-offset:0.8px;text-decoration-thickness:0.35px">10.04</div>
<svg class="a" style="left:637.5px;top:169.05px" width="4" height="3.8" viewBox="0 0 4 3.8"><rect x="0.3" y="0.3" width="3.4" height="3.2" fill="none" stroke="#a9aeb5" stroke-width="0.5"/><rect x="1.5" y="1.1" width="1" height="1.6" fill="#b9bdc3"/></svg>
<div class="t" style="left:12.2px;top:187.89px;font-size:5.45px;color:#3274d9;">Collection|Corporate Aud|07.03.2023</div>
<div class="t" style="left:145.7px;top:187.89px;font-size:5.45px;color:#343d45;">7-day click or ...</div>
<div class="t" style="right:409px;top:187.89px;font-size:5.45px;color:#343d45;text-decoration:underline;text-decoration-color:#a0a6ad;text-underline-offset:0.8px;text-decoration-thickness:0.35px">85</div>
<svg class="a" style="left:241.4px;top:187.5px" width="4" height="3.8" viewBox="0 0 4 3.8"><rect x="0.3" y="0.3" width="3.4" height="3.2" fill="none" stroke="#a9aeb5" stroke-width="0.5"/><rect x="1.5" y="1.1" width="1" height="1.6" fill="#b9bdc3"/></svg>
<div class="t" style="right:409px;top:196.71px;font-size:4.6px;color:#7f868f;">Website purchases</div>
<div class="t" style="right:345px;top:187.89px;font-size:5.45px;color:#343d45;">64,733</div>
<div class="t" style="right:286.6px;top:187.89px;font-size:5.45px;color:#343d45;">145,025</div>
<div class="t" style="right:233.5px;top:187.89px;font-size:5.45px;color:#343d45;text-decoration:underline;text-decoration-color:#a0a6ad;text-underline-offset:0.8px;text-decoration-thickness:0.35px">Rs342.65</div>
<svg class="a" style="left:417.0px;top:187.5px" width="4" height="3.8" viewBox="0 0 4 3.8"><rect x="0.3" y="0.3" width="3.4" height="3.2" fill="none" stroke="#a9aeb5" stroke-width="0.5"/><rect x="1.5" y="1.1" width="1" height="1.6" fill="#b9bdc3"/></svg>
<div class="t" style="right:233.5px;top:196.71px;font-size:4.6px;color:#7f868f;">Per Purchase</div>
<div class="t" style="right:169.4px;top:187.89px;font-size:5.45px;color:#343d45;">Rs29,124.87</div>
<div class="t" style="right:124.2px;top:187.89px;font-size:5.45px;color:#343d45;">Ongoing</div>
<div class="a" style="left:527.3px;top:184.5px;width:0.6px;height:10.2px;background:#e6e8eb"></div>
<div class="t" style="right:71.2px;top:187.89px;font-size:5.45px;color:#343d45;text-decoration:underline;text-decoration-color:#a0a6ad;text-underline-offset:0.8px;text-decoration-thickness:0.35px">9.93</div>
<svg class="a" style="left:579.3px;top:187.5px" width="4" height="3.8" viewBox="0 0 4 3.8"><rect x="0.3" y="0.3" width="3.4" height="3.2" fill="none" stroke="#a9aeb5" stroke-width="0.5"/><rect x="1.5" y="1.1" width="1" height="1.6" fill="#b9bdc3"/></svg>
<div class="t" style="right:13px;top:187.89px;font-size:5.45px;color:#343d45;text-decoration:underline;text-decoration-color:#a0a6ad;text-underline-offset:0.8px;text-decoration-thickness:0.35px">9.93</div>
<svg class="a" style="left:637.5px;top:187.5px" width="4" height="3.8" viewBox="0 0 4 3.8"><rect x="0.3" y="0.3" width="3.4" height="3.2" fill="none" stroke="#a9aeb5" stroke-width="0.5"/><rect x="1.5" y="1.1" width="1" height="1.6" fill="#b9bdc3"/></svg>
<div class="t" style="left:12.2px;top:206.34px;font-size:5.45px;color:#3274d9;">ASC|Carousel Ads |24-01-24|basit - Campaign ...</div>
<div class="t" style="left:145.7px;top:206.34px;font-size:5.45px;color:#343d45;">1-day click</div>
<div class="t" style="right:409px;top:206.34px;font-size:5.45px;color:#343d45;text-decoration:underline;text-decoration-color:#a0a6ad;text-underline-offset:0.8px;text-decoration-thickness:0.35px">47</div>
<svg class="a" style="left:241.4px;top:205.95px" width="4" height="3.8" viewBox="0 0 4 3.8"><rect x="0.3" y="0.3" width="3.4" height="3.2" fill="none" stroke="#a9aeb5" stroke-width="0.5"/><rect x="1.5" y="1.1" width="1" height="1.6" fill="#b9bdc3"/></svg>
<div class="t" style="right:409px;top:215.16px;font-size:4.6px;color:#7f868f;">Website purchases</div>
<div class="t" style="right:345px;top:206.34px;font-size:5.45px;color:#343d45;">15,101</div>
<div class="t" style="right:286.6px;top:206.34px;font-size:5.45px;color:#343d45;">42,448</div>
<div class="t" style="right:233.5px;top:206.34px;font-size:5.45px;color:#343d45;text-decoration:underline;text-decoration-color:#a0a6ad;text-underline-offset:0.8px;text-decoration-thickness:0.35px">Rs270.27</div>
<svg class="a" style="left:417.0px;top:205.95px" width="4" height="3.8" viewBox="0 0 4 3.8"><rect x="0.3" y="0.3" width="3.4" height="3.2" fill="none" stroke="#a9aeb5" stroke-width="0.5"/><rect x="1.5" y="1.1" width="1" height="1.6" fill="#b9bdc3"/></svg>
<div class="t" style="right:233.5px;top:215.16px;font-size:4.6px;color:#7f868f;">Per Purchase</div>
<div class="t" style="right:169.4px;top:206.34px;font-size:5.45px;color:#343d45;">Rs12,702.53</div>
<div class="t" style="right:124.2px;top:206.34px;font-size:5.45px;color:#343d45;">Ongoing</div>
<div class="a" style="left:527.3px;top:202.89px;width:0.6px;height:10.2px;background:#e6e8eb"></div>
<div class="t" style="right:71.2px;top:206.34px;font-size:5.45px;color:#343d45;text-decoration:underline;text-decoration-color:#a0a6ad;text-underline-offset:0.8px;text-decoration-thickness:0.35px">9.88</div>
<svg class="a" style="left:579.3px;top:205.95px" width="4" height="3.8" viewBox="0 0 4 3.8"><rect x="0.3" y="0.3" width="3.4" height="3.2" fill="none" stroke="#a9aeb5" stroke-width="0.5"/><rect x="1.5" y="1.1" width="1" height="1.6" fill="#b9bdc3"/></svg>
<div class="t" style="right:13px;top:206.34px;font-size:5.45px;color:#343d45;text-decoration:underline;text-decoration-color:#a0a6ad;text-underline-offset:0.8px;text-decoration-thickness:0.35px">9.88</div>
<svg class="a" style="left:637.5px;top:205.95px" width="4" height="3.8" viewBox="0 0 4 3.8"><rect x="0.3" y="0.3" width="3.4" height="3.2" fill="none" stroke="#a9aeb5" stroke-width="0.5"/><rect x="1.5" y="1.1" width="1" height="1.6" fill="#b9bdc3"/></svg>
</div>
<div class="t" style="left:13.8px;top:324.19px;font-size:5.45px;color:#343d45;">Results from 110 campaigns</div>
<svg class="a" style="left:85px;top:324.1px" width="4.5" height="4.5" viewBox="0 0 4.5 4.5"><circle cx="2.25" cy="2.25" r="2.25" fill="#1c2b33"/><rect x="1.9" y="1.8" width="0.7" height="1.8" fill="#fff"/><rect x="1.9" y="0.8" width="0.7" height="0.6" fill="#fff"/></svg>
<div class="t" style="left:13.8px;top:333.41px;font-size:4.6px;color:#8a9099;">Excludes deleted items</div>
<div class="t" style="left:145.7px;top:324.19px;font-size:5.45px;color:#343d45;">Multiple attrib...</div>
<div class="t" style="right:402.7px;top:324.19px;font-size:5.45px;color:#343d45;">—</div>
<div class="t" style="right:402.7px;top:333.41px;font-size:4.6px;color:#6f7780;">Multiple conversions</div>
<div class="t" style="right:344px;top:324.19px;font-size:5.45px;color:#343d45;text-decoration:underline;text-decoration-color:#a0a6ad;text-underline-offset:0.8px;text-decoration-thickness:0.35px">1,354,962</div>
<div class="t" style="right:344px;top:333.41px;font-size:4.6px;color:#6f7780;">Accounts Center acco...</div>
<div class="t" style="right:286.6px;top:324.19px;font-size:5.45px;color:#343d45;">5,356,167</div>
<div class="t" style="right:286.6px;top:333.41px;font-size:4.6px;color:#6f7780;">Total</div>
<div class="t" style="right:227.4px;top:324.19px;font-size:5.45px;color:#343d45;">—</div>
<div class="t" style="right:227.4px;top:333.41px;font-size:4.6px;color:#6f7780;">Multiple conversions</div>
<div class="t" style="right:169.4px;top:324.19px;font-size:5.45px;color:#343d45;">Rs1,036,483.65</div>
<div class="t" style="right:169.4px;top:333.41px;font-size:4.6px;color:#6f7780;">Total spent</div>
<div class="t" style="right:66px;top:324.19px;font-size:5.45px;color:#343d45;">—</div>
<div class="t" style="right:66px;top:333.41px;font-size:4.6px;color:#6f7780;">Average</div>
<div class="t" style="right:6.5px;top:324.19px;font-size:5.45px;color:#343d45;">—</div>
<div class="t" style="right:6.5px;top:333.41px;font-size:4.6px;color:#6f7780;">Average</div>
<div class="a" style="left:-6px;top:345.2px;width:654px;height:5.3px;background:#fff"></div>
<div class="a" style="left:96.8px;top:346.1px;width:549.8px;height:3.0px;background:#c2c5ca;border-radius:2px"></div>
<div class="a" style="left:-6px;top:350.5px;width:654px;height:5.5px;background:#e7effb"></div>
</div>
<div class="a" style="left:155px;top:433px;width:631px;height:209px;background:#fff;border-radius:5px;overflow:hidden">
<div class="a" style="left:0px;top:0;width:117px;height:73.6px;background:#1a73e8"></div>
<div class="a" style="left:117px;top:0;width:117px;height:73.6px;background:#d93025"></div>
<div class="a" style="left:234px;top:0;width:117px;height:73.6px;background:#f9ab00"></div>
<div class="a" style="left:351px;top:0;width:117px;height:73.6px;background:#1e8e3e"></div>
<svg class="a" style="left:0;top:0" width="631" height="80" viewBox="0 0 631 80" font-family="Liberation Sans, sans-serif"><text x="10.2" y="24.899999999999977" textLength="24.5" lengthAdjust="spacingAndGlyphs" font-size="9.3" fill="#fff" stroke="#fff" stroke-width="0.12">Clicks</text><text x="10.8" y="53" textLength="49" lengthAdjust="spacingAndGlyphs" font-size="20.4" fill="#fff" stroke="#fff" stroke-width="0.2">3.25K</text><text x="127.2" y="24.899999999999977" textLength="51.3" lengthAdjust="spacingAndGlyphs" font-size="9.3" fill="#fff" stroke="#fff" stroke-width="0.12">Actual ROAS</text><text x="127.8" y="53" textLength="67" lengthAdjust="spacingAndGlyphs" font-size="20.4" fill="#fff" stroke="#fff" stroke-width="0.2">417.81%</text><text x="244.2" y="24.899999999999977" textLength="48.1" lengthAdjust="spacingAndGlyphs" font-size="9.3" fill="#3c4043" stroke="#3c4043" stroke-width="0.12">Cost / conv.</text><text x="244.8" y="53" textLength="47.7" lengthAdjust="spacingAndGlyphs" font-size="20.4" fill="#3c4043" stroke="#3c4043" stroke-width="0.2">£6.39</text><text x="361.2" y="24.899999999999977" textLength="68.7" lengthAdjust="spacingAndGlyphs" font-size="9.3" fill="#fff" stroke="#fff" stroke-width="0.12">Purchases/Sales</text><text x="361.8" y="53" textLength="52.3" lengthAdjust="spacingAndGlyphs" font-size="20.4" fill="#fff" stroke="#fff" stroke-width="0.2">68.00</text></svg>
<svg class="a" style="left:39.50px;top:19.80px" width="6.2" height="3.6" viewBox="0 0 6.2 3.6"><path d="M0 0H6.2L3.1 3.6Z" fill="#fff"/></svg>
<svg class="a" style="left:183.20px;top:19.80px" width="6.2" height="3.6" viewBox="0 0 6.2 3.6"><path d="M0 0H6.2L3.1 3.6Z" fill="#fff"/></svg>
<svg class="a" style="left:297.80px;top:19.80px" width="6.2" height="3.6" viewBox="0 0 6.2 3.6"><path d="M0 0H6.2L3.1 3.6Z" fill="#3c4043"/></svg>
<svg class="a" style="left:434.70px;top:19.80px" width="6.2" height="3.6" viewBox="0 0 6.2 3.6"><path d="M0 0H6.2L3.1 3.6Z" fill="#fff"/></svg>
<div class="a" style="left:609.35px;top:13.65px;width:2.5px;height:2.5px;border-radius:50%;background:#5f6368"></div>
<div class="a" style="left:609.35px;top:17.55px;width:2.5px;height:2.5px;border-radius:50%;background:#5f6368"></div>
<div class="a" style="left:609.35px;top:21.45px;width:2.5px;height:2.5px;border-radius:50%;background:#5f6368"></div>
<svg class="a" style="left:0;top:0" width="631" height="208" viewBox="0 0 631 208"><line x1="38.599999999999994" y1="86.40" x2="585" y2="86.40" stroke="#e8e8e8" stroke-width="1"/><line x1="38.599999999999994" y1="135.50" x2="585" y2="135.50" stroke="#e8e8e8" stroke-width="1"/><line x1="38.599999999999994" y1="183.50" x2="585" y2="183.50" stroke="#dadce0" stroke-width="1"/><line x1="45.69999999999999" y1="183.20" x2="45.69999999999999" y2="187.00" stroke="#dadce0" stroke-width="0.8"/><polyline points="45.70,183.52 62.55,183.52 79.41,170.99 96.26,170.99 113.11,161.90 129.97,152.80 146.82,144.51 163.67,152.39 180.52,118.84 197.38,89.93 214.23,159.87 231.08,154.62 247.94,152.19 264.79,128.95 281.64,136.02 298.50,149.16 315.35,144.11 332.20,141.48 349.06,145.52 365.91,129.96 382.76,126.32 399.62,130.97 416.47,151.59 433.32,146.53 450.17,127.53 467.03,157.65 483.88,152.80 500.73,124.90 517.59,140.47 534.44,143.50 551.29,133.60 568.15,162.30 585.00,183.52" fill="none" stroke="#4285f4" stroke-width="1.5" stroke-linejoin="round"/><polyline points="45.70,183.52 62.55,183.52 79.41,125.31 96.26,174.02 113.11,183.52 129.97,104.69 146.82,183.52 163.67,183.52 180.52,175.03 197.38,172.41 214.23,180.90 231.08,159.27 247.94,183.52 264.79,148.15 281.64,183.52 298.50,160.88 315.35,153.20 332.20,149.56 349.06,182.92 365.91,167.96 382.76,169.98 399.62,183.52 416.47,183.52 433.32,183.52 450.17,176.45 467.03,183.52 483.88,175.44 500.73,178.47 517.59,183.52 534.44,161.90 551.29,183.12 568.15,183.52 585.00,183.52" fill="none" stroke="#db4437" stroke-width="1.5" stroke-linejoin="round"/><polyline points="45.70,183.52 62.55,183.52 79.41,182.92 96.26,181.50 113.11,149.56 129.97,183.52 146.82,183.52 163.67,90.54 180.52,181.50 197.38,182.92 214.23,175.44 231.08,182.92 247.94,182.92 264.79,183.52 281.64,183.52 298.50,183.52 315.35,183.52 332.20,183.52 349.06,183.52 365.91,180.90 382.76,182.11 399.62,183.52 416.47,183.52 433.32,183.52 450.17,183.12 467.03,183.52 483.88,181.91 500.73,182.51 517.59,182.92 534.44,183.52 551.29,182.92 568.15,183.52 585.00,183.52" fill="none" stroke="#f4b400" stroke-width="1.5" stroke-linejoin="round"/><polyline points="45.70,183.52 62.55,183.52 79.41,175.84 96.26,181.50 113.11,183.52 129.97,135.62 146.82,183.52 163.67,183.52 180.52,175.44 197.38,146.13 214.23,182.51 231.08,175.84 247.94,175.84 264.79,119.24 281.64,183.52 298.50,151.59 315.35,151.59 332.20,151.79 349.06,159.67 365.91,179.48 382.76,171.40 399.62,183.52 416.47,183.52 433.32,183.52 450.17,143.70 467.03,183.52 483.88,175.44 500.73,159.27 517.59,159.27 534.44,86.50 551.29,151.59 568.15,183.52 585.00,183.52" fill="none" stroke="#2e8b3e" stroke-width="1.5" stroke-linejoin="round"/></svg>
<div class="t" style="left:46px;top:189.50px;font-size:7.8px;color:#70757a;-webkit-text-stroke:0.12px #70757a">Feb 23, 2025</div>
<div class="t" style="right:46px;top:189.50px;font-size:7.8px;color:#70757a;-webkit-text-stroke:0.12px #70757a">Mar 27, 2025</div>
</div>
<svg class="a" style="left:0;top:0" width="940" height="655" viewBox="0 0 940 655"><g stroke="#e5332a" stroke-width="1.35" fill="none"><line x1="831" y1="91.8" x2="789.9" y2="120.4"/><line x1="102" y1="319.9" x2="159.5" y2="342.3"/><line x1="127.3" y1="453.8" x2="272" y2="477"/></g></svg>
<svg class="a" style="left:0;top:0" width="940" height="655" viewBox="0 0 940 655" font-family="Liberation Sans, sans-serif"><text x="814" y="85.9" textLength="23.9" lengthAdjust="spacingAndGlyphs" font-size="15.2" font-weight="bold" fill="#76d000" stroke="#76d000" stroke-width="0.3">16x</text><text x="841.6" y="85.9" textLength="74.6" lengthAdjust="spacingAndGlyphs" font-size="15.2" font-weight="normal" fill="#111" stroke="#111" stroke-width="0.22">Max ROAS</text><text x="11" y="294.9" textLength="34" lengthAdjust="spacingAndGlyphs" font-size="14.9" font-weight="bold" fill="#7bc224" stroke="#7bc224" stroke-width="0.3">100+</text><text x="49.7" y="294.9" textLength="89" lengthAdjust="spacingAndGlyphs" font-size="14.9" font-weight="normal" fill="#111" stroke="#111" stroke-width="0.22">Campaigns</text><text x="11" y="318.2" textLength="72.4" lengthAdjust="spacingAndGlyphs" font-size="14.9" font-weight="normal" fill="#111" stroke="#111" stroke-width="0.22">Managed</text><text x="804.7" y="349" textLength="106.6" lengthAdjust="spacingAndGlyphs" font-size="11.9" font-weight="normal" fill="#7a7a7a" stroke="#7a7a7a" stroke-width="0.1">Analytics by Meta</text><text x="804.7" y="366.8" textLength="51.5" lengthAdjust="spacingAndGlyphs" font-size="11.9" font-weight="normal" fill="#7a7a7a" stroke="#7a7a7a" stroke-width="0.1">Business</text><text x="17.9" y="458.9" textLength="51" lengthAdjust="spacingAndGlyphs" font-size="14.3" font-weight="bold" fill="#7cc143" stroke="#7cc143" stroke-width="0.3">+400%</text><text x="73.5" y="458.9" textLength="39.7" lengthAdjust="spacingAndGlyphs" font-size="14.3" font-weight="normal" fill="#111" stroke="#111" stroke-width="0.22">ROAS</text><text x="804.7" y="619" textLength="119" lengthAdjust="spacingAndGlyphs" font-size="11.9" font-weight="normal" fill="#7a7a7a" stroke="#7a7a7a" stroke-width="0.1">Analytics by Google</text><text x="804.7" y="636.8" textLength="21.7" lengthAdjust="spacingAndGlyphs" font-size="11.9" font-weight="normal" fill="#7a7a7a" stroke="#7a7a7a" stroke-width="0.1">Ads</text></svg>
</body></html>
